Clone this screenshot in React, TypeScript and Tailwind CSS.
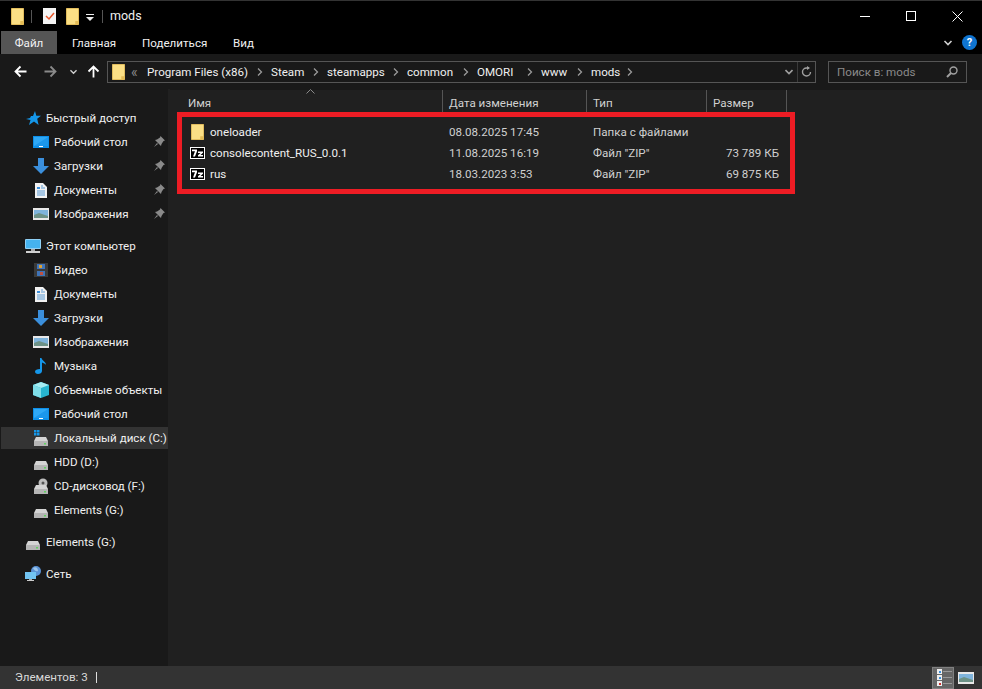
import React from "react";

const Folder = ({ w = 13, h = 16 }: { w?: number; h?: number }) => (
  <svg width={w} height={h} viewBox="0 0 14 17" preserveAspectRatio="none" className="shrink-0">
    <path d="M.5.5h13v16H.5z" fill="#fbdf85" stroke="#e8c25f" />
    <path d="M10 13h3.500v3.500H10z" fill="#e4bb55" />
  </svg>
);
const Desktop = () => (
  <svg width="16" height="13" viewBox="0 0 16 13"><rect width="16" height="12" fill="#0d8fe8" /><path d="M1 1h14v9H1z" fill="#2fa8f5" /><path d="M1 10 15 1v9z" fill="#1b97ec" /><rect x="6" y="10" width="4" height="1" fill="#fff" /></svg>
);
const Down = () => (
  <svg width="16" height="16" viewBox="0 0 16 16"><path d="M5 0h6v8h5l-8 8-8-8h5z" fill="#3b8fdc" /></svg>
);
const Doc = () => (
  <svg width="12" height="15" viewBox="0 0 12 15"><path d="M0 0h8l4 4v11H0z" fill="#f2f2f2" /><path d="M2 4h3v2H2z" fill="#3b8fdc" /><path d="M6 3h2M6 5h4M2 8h8M2 10h8M2 12h8" stroke="#5b9bd5" /></svg>
);
const Pics = () => (
  <svg width="16" height="12" viewBox="0 0 16 12"><rect width="16" height="12" fill="#e8e8e8" /><rect x="1" y="2" width="14" height="8" fill="#7fb4dc" /><path d="M1 7l5-2 9 3v2H1z" fill="#6d9287" /></svg>
);
const Pc = () => (
  <svg width="16" height="15" viewBox="0 0 16 15"><rect width="16" height="10" rx="1" fill="#8fd0f5" /><rect x="1" y="1" width="14" height="8" fill="#45b2ee" /><rect x="6" y="10" width="4" height="2" fill="#aaa" /><rect x="1" y="12" width="14" height="2" fill="#d0d0d0" /></svg>
);
const Video = () => (
  <svg width="14" height="14" viewBox="0 0 14 14"><rect width="14" height="14" fill="#3a3a3a" /><rect x="3" y="1" width="8" height="5" fill="#3f74b8" /><rect x="3" y="8" width="8" height="5" fill="#3f74b8" /><rect x="5" y="2" width="3" height="3" fill="#e0a030" /><rect x="6" y="9" width="3" height="3" fill="#c05040" /></svg>
);
const Music = () => (
  <svg width="12" height="16" viewBox="0 0 12 16"><path d="M5 0h1.500c.5 3 4.500 3.500 4.500 7-1-1.500-2.500-2-4-2.500V13c0 2-2 3-4 3s-3-1-3-2.500S2 11 5 11z" fill="#1597ea" /></svg>
);
const Cube = () => (
  <svg width="16" height="16" viewBox="0 0 16 16"><path d="M8 0l8 3v10l-8 3-8-3V3z" fill="#27b5cf" /><path d="M8 0l8 3-8 3-8-3z" fill="#a5ecf2" /><path d="M0 3l8 3v10l-8-3z" fill="#7fdde8" /></svg>
);
const Drive = ({ kind }: { kind?: "win" | "cd" }) => (
  <svg width="14" height="16" viewBox="0 0 14 16">
    {kind === "win" && <path d="M0 0h2.500v2.500H0zM3 0h2.500v2.500H3zM0 3h2.500v2.500H0zM3 3h2.500v2.500H3z" fill="#1597ea" />}
    {kind === "cd" && <g><circle cx="9" cy="5" r="4.500" fill="#bdbdbd" /><circle cx="9" cy="5" r="1.500" fill="#555" /></g>}
    <path d="M2 7h10l2 4H0z" fill="#d4d4d4" />
    <rect y="11" width="14" height="5" fill="#b5b5b5" />
    <rect x="10" y="13" width="2" height="1.500" fill="#5fd35f" />
  </svg>
);
const Net = () => (
  <svg width="16" height="16" viewBox="0 0 16 16"><circle cx="11" cy="5" r="5" fill="#5b93d6" /><path d="M8 2c3-2 5 0 5 3-2 1-4-1-5-3z" fill="#9cc6ec" /><rect y="6" width="11" height="7" fill="#72c4f2" /><rect x="4" y="13" width="3" height="1" fill="#aaa" /><rect x="2" y="14" width="7" height="1" fill="#ccc" /></svg>
);
const Pin = () => (
  <svg width="11" height="11" viewBox="0 0 11 11"><path d="M6.500 0 11 4.500 9.500 5 7.500 8 7 10 1 4l2-.5L6 1.500zM3 7 0 11l4-3z" fill="#8a8a8a" /></svg>
);
const Star = () => (
  <svg width="15" height="15" viewBox="0 0 15 15"><path d="M9 0l1.300 4.700H15l-3.800 3 1.400 6.300L8 10.500 3 14l1.500-5L0 8l4-1 1-2h2z" fill="#1597ea" /></svg>
);
const SevenZ = () => (
  <svg width="15" height="12" viewBox="0 0 15 12" className="shrink-0">
    <rect width="15" height="12" fill="#fff" />
    <rect x="1" y="1" width="13" height="10" fill="#000" />
    <path d="M2 2.500h5v1.800L5 9.500H3L5 4.300H2zM8 4.500h5v1.300L10.500 8H13v1.500H8V8.200l2.500-2.200H8z" fill="#fff" />
  </svg>
);

const Chev = ({ c = "#9a9a9a" }: { c?: string }) => (
  <svg width="6" height="8" viewBox="0 0 6 8"><path d="M1 .5 4.500 4 1 7.500" fill="none" stroke={c} strokeWidth="1.300" /></svg>
);
const ChevDown = ({ w = 8, c = "#cfcfcf" }: { w?: number; c?: string }) => (
  <svg width={w} height="6" viewBox="0 0 8 6"><path d="M.5 1 4 4.500 7.500 1" fill="none" stroke={c} strokeWidth="1.600" /></svg>
);
const Arrow = ({ c, r = 0 }: { c: string; r?: number }) => (
  <svg width="13" height="13" viewBox="0 0 13 13" style={{ transform: `rotate(${r}deg)` }}><path d="M12.500 6.500H1.500M6.500 1.500l-5 5 5 5" fill="none" stroke={c} strokeWidth="1.800" /></svg>
);

type NavItem = { icon: React.ReactNode; label: string; top?: boolean; pin?: boolean; sel?: boolean; gap?: boolean };
const items: NavItem[] = [
  { icon: <Star />, label: "Быстрый доступ", top: true },
  { icon: <Desktop />, label: "Рабочий стол", pin: true },
  { icon: <Down />, label: "Загрузки", pin: true },
  { icon: <Doc />, label: "Документы", pin: true },
  { icon: <Pics />, label: "Изображения", pin: true },
  { icon: <Pc />, label: "Этот компьютер", top: true, gap: true },
  { icon: <Video />, label: "Видео" },
  { icon: <Doc />, label: "Документы" },
  { icon: <Down />, label: "Загрузки" },
  { icon: <Pics />, label: "Изображения" },
  { icon: <Music />, label: "Музыка" },
  { icon: <Cube />, label: "Объемные объекты" },
  { icon: <Desktop />, label: "Рабочий стол" },
  { icon: <Drive kind="win" />, label: "Локальный диск (C:)", sel: true },
  { icon: <Drive />, label: "HDD (D:)" },
  { icon: <Drive kind="cd" />, label: "CD-дисковод (F:)" },
  { icon: <Drive />, label: "Elements (G:)" },
  { icon: <Drive />, label: "Elements (G:)", top: true, gap: true },
  { icon: <Net />, label: "Сеть", top: true, gap: true },
];

const crumbs: [string, string][] = [
  ["Program Files (x86)", "w-[124px]"],
  ["Steam", "w-[56px]"],
  ["steamapps", "w-[80px]"],
  ["common", "w-[70px]"],
  ["OMORI", "w-[64px]"],
  ["www", "w-[50px]"],
  ["mods", "w-[50px]"],
];

const rows = [
  { icon: <Folder />, name: "oneloader", date: "08.08.2025 17:45", type: "Папка с файлами", size: "" },
  { icon: <SevenZ />, name: "consolecontent_RUS_0.0.1", date: "11.08.2025 16:19", type: 'Файл "ZIP"', size: "73 789 КБ" },
  { icon: <SevenZ />, name: "rus", date: "18.03.2023 3:53", type: 'Файл "ZIP"', size: "69 875 КБ" },
];

export default function App() {
  return (
    <div className="w-[982px] h-[689px] overflow-hidden relative flex flex-col bg-black text-[11.6px] leading-[16px] text-[#f0f0f0] font-['Roboto','Liberation_Sans',sans-serif]">
      {/* title bar */}
      <div className="h-[31px] flex items-center shrink-0 pl-[11px] border-t border-[#333]">
        <Folder w={13} h={17} />
        <div className="w-px h-[13px] bg-[#555] ml-[7px]" />
        <svg width="13" height="16" viewBox="0 0 13 16" className="ml-[11px]"><path d="M0 0h13v16H0z" fill="#f4f4f4" /><path d="M3 8l3 3 5-6" fill="none" stroke="#e8562a" strokeWidth="1.500" /></svg>
        <div className="ml-[10px]"><Folder w={13} h={17} /></div>
        <svg width="8" height="7" viewBox="0 0 8 7" className="ml-[7px] mt-[3px]"><path d="M0 0h8v1H0zM0 3h8L4 7z" fill="#eee" /></svg>
        <div className="w-px h-[13px] bg-[#555] ml-[8px]" />
        <span className="ml-[7px] text-[12.5px]">mods</span>
        <div className="ml-auto flex items-center h-full pr-[2px]">
          <div className="w-[46px] flex justify-center"><div className="w-[10px] h-px bg-white" /></div>
          <div className="w-[46px] flex justify-center"><div className="w-[10px] h-[10px] border border-white" /></div>
          <div className="w-[46px] flex justify-center">
            <svg width="11" height="11" viewBox="0 0 11 11"><path d="M.5.5l10 10M10.500.5l-10 10" stroke="#fff" /></svg>
          </div>
        </div>
      </div>
      {/* ribbon tabs */}
      <div className="h-[23px] flex items-center shrink-0 pl-px relative">
        <div className="w-[56px] h-full bg-[#555] flex items-center justify-center">Файл</div>
        <span className="ml-[15px] w-[70px]">Главная</span>
        <span className="w-[91px]">Поделиться</span>
        <span>Вид</span>
        <div className="ml-auto flex items-center gap-[9px] pr-[5px]">
          <ChevDown w={10} />
          <div className="w-[15px] h-[15px] rounded-full bg-[#0f74d0] flex items-center justify-center font-bold text-[11px] text-white">?</div>
        </div>
      </div>
      {/* address bar */}
      <div className="h-[35px] bg-[#191919] flex items-center shrink-0">
        <div className="ml-[14px]"><Arrow c="#fff" /></div>
        <div className="ml-[17px]"><Arrow c="#8a8a8a" r={180} /></div>
        <div className="ml-[13px]"><ChevDown w={7} /></div>
        <div className="ml-[10px]"><Arrow c="#fff" r={90} /></div>
        <div className="ml-[7px] w-[709px] h-[22px] border border-[#555] flex items-center pl-[4px]">
          <Folder w={13} h={16} />
          <span className="ml-[6px] w-[16px] text-[#8a8a8a] text-[14px]">«</span>
          {crumbs.map(([t, w]) => (
            <div key={t} className={`${w} flex items-center shrink-0`}>
              <span>{t}</span>
              <span className="ml-auto mr-[8px]"><Chev /></span>
            </div>
          ))}
          <div className="ml-auto flex items-center h-full">
            <ChevDown w={8} c="#a0a0a0" />
            <div className="w-px h-full bg-[#3a3a3a] ml-[4px]" />
            <svg width="11" height="12" viewBox="0 0 11 12" className="mx-[3px]"><path d="M9.500 6a4 4 0 1 1-4-4H8" fill="none" stroke="#a0a0a0" strokeWidth="1.400" /><path d="M6 0l3 2-3 2z" fill="#a0a0a0" /></svg>
          </div>
        </div>
        <div className="ml-[12px] w-[139px] h-[22px] border border-[#555] flex items-center pl-[8px] pr-[8px] text-[#8a8a8a]">
          <span>Поиск в: mods</span>
          <svg width="12" height="12" viewBox="0 0 12 12" className="ml-auto"><circle cx="7.500" cy="4.500" r="3.500" fill="none" stroke="#a0a0a0" strokeWidth="1.400" /><path d="M5 7l-4 4" stroke="#a0a0a0" strokeWidth="2" /></svg>
        </div>
      </div>
      {/* body */}
      <div className="flex-1 flex min-h-0 bg-[#191919]">
        <nav className="w-[168px] shrink-0 pt-[18px] pl-px overflow-hidden">
          {items.map((it, i) => (
            <div key={i} className={`h-[22px] mb-[2px] flex items-center whitespace-nowrap relative ${it.sel ? "bg-[#333]" : ""} ${it.gap ? "mt-[10px]" : ""}`}>
              <div className={`w-[16px] flex justify-center shrink-0 ${it.top ? "ml-[24px]" : "ml-[32px]"}`}>{it.icon}</div>
              <span className="ml-[5px]">{it.label}</span>
              {it.pin && <span className="absolute right-[3px] top-[5px]"><Pin /></span>}
            </div>
          ))}
        </nav>
        <div className="w-[2px] shrink-0 bg-[#202020]" />
        <main className="flex-1 bg-[#202020] mt-px text-[#f0f0f0] relative">
          <div className="h-[22px] flex text-[#d0d0d0] relative">
            <div className="absolute left-[136px] -top-[1px]"><svg width="9" height="5" viewBox="0 0 9 5"><path d="M.5 4.500 4.500.5l4 4" fill="none" stroke="#8a8a8a" /></svg></div>
            <div className="w-[273px] border-r border-[#555] pl-[18px] pt-[5px]">Имя</div>
            <div className="w-[144px] border-r border-[#555] pl-[6px] pt-[5px]">Дата изменения</div>
            <div className="w-[120px] border-r border-[#555] pl-[6px] pt-[5px]">Тип</div>
            <div className="w-[80px] border-r border-[#555] pl-[6px] pt-[5px]">Размер</div>
          </div>
          <div className="pt-[9px]">
            {rows.map((r) => (
              <div key={r.name} className="h-[21px] flex items-center whitespace-nowrap">
                <div className="w-[272px] flex items-center pl-[20px]">
                  <div className="w-[15px] flex justify-center shrink-0">{r.icon}</div>
                  <span className="ml-[5px]">{r.name}</span>
                </div>
                <div className="w-[144px] pl-[7px] text-[#d0d0d0]">{r.date}</div>
                <div className="w-[120px] pl-[7px] text-[#d0d0d0]">{r.type}</div>
                <div className="w-[73px] text-right text-[#d0d0d0]">{r.size}</div>
              </div>
            ))}
          </div>
          <div className="absolute left-[7px] top-[22px] w-[618px] h-[82px] border-[5px] border-[#ed1c24]" />
        </main>
      </div>
      {/* status bar */}
      <div className="h-[23px] bg-[#333] flex items-center shrink-0 text-[#d8d8d8] pl-[15px]">
        <span className="w-[82px] border-r border-[#ddd] h-[11px] leading-[11px]">Элементов: 3</span>
        <div className="ml-auto flex items-center pr-[8px]">
          <div className="w-[22px] h-[22px] bg-[#666] border border-[#808080] flex flex-col justify-center gap-px pl-[4px]">
            {["#3b8fdc", "#3b8fdc", "#d03030"].map((c, i) => (
              <div key={i} className="flex items-center gap-[1px]">
                <div className="w-[5px] h-[5px] bg-[#eee] flex items-center justify-center"><div className="w-[2px] h-[2px]" style={{ background: c }} /></div>
                <div className="w-[9px] h-px bg-[#999]" />
              </div>
            ))}
          </div>
          <div className="ml-[4px] flex justify-center"><Pics /></div>
        </div>
      </div>
    </div>
  );
}
